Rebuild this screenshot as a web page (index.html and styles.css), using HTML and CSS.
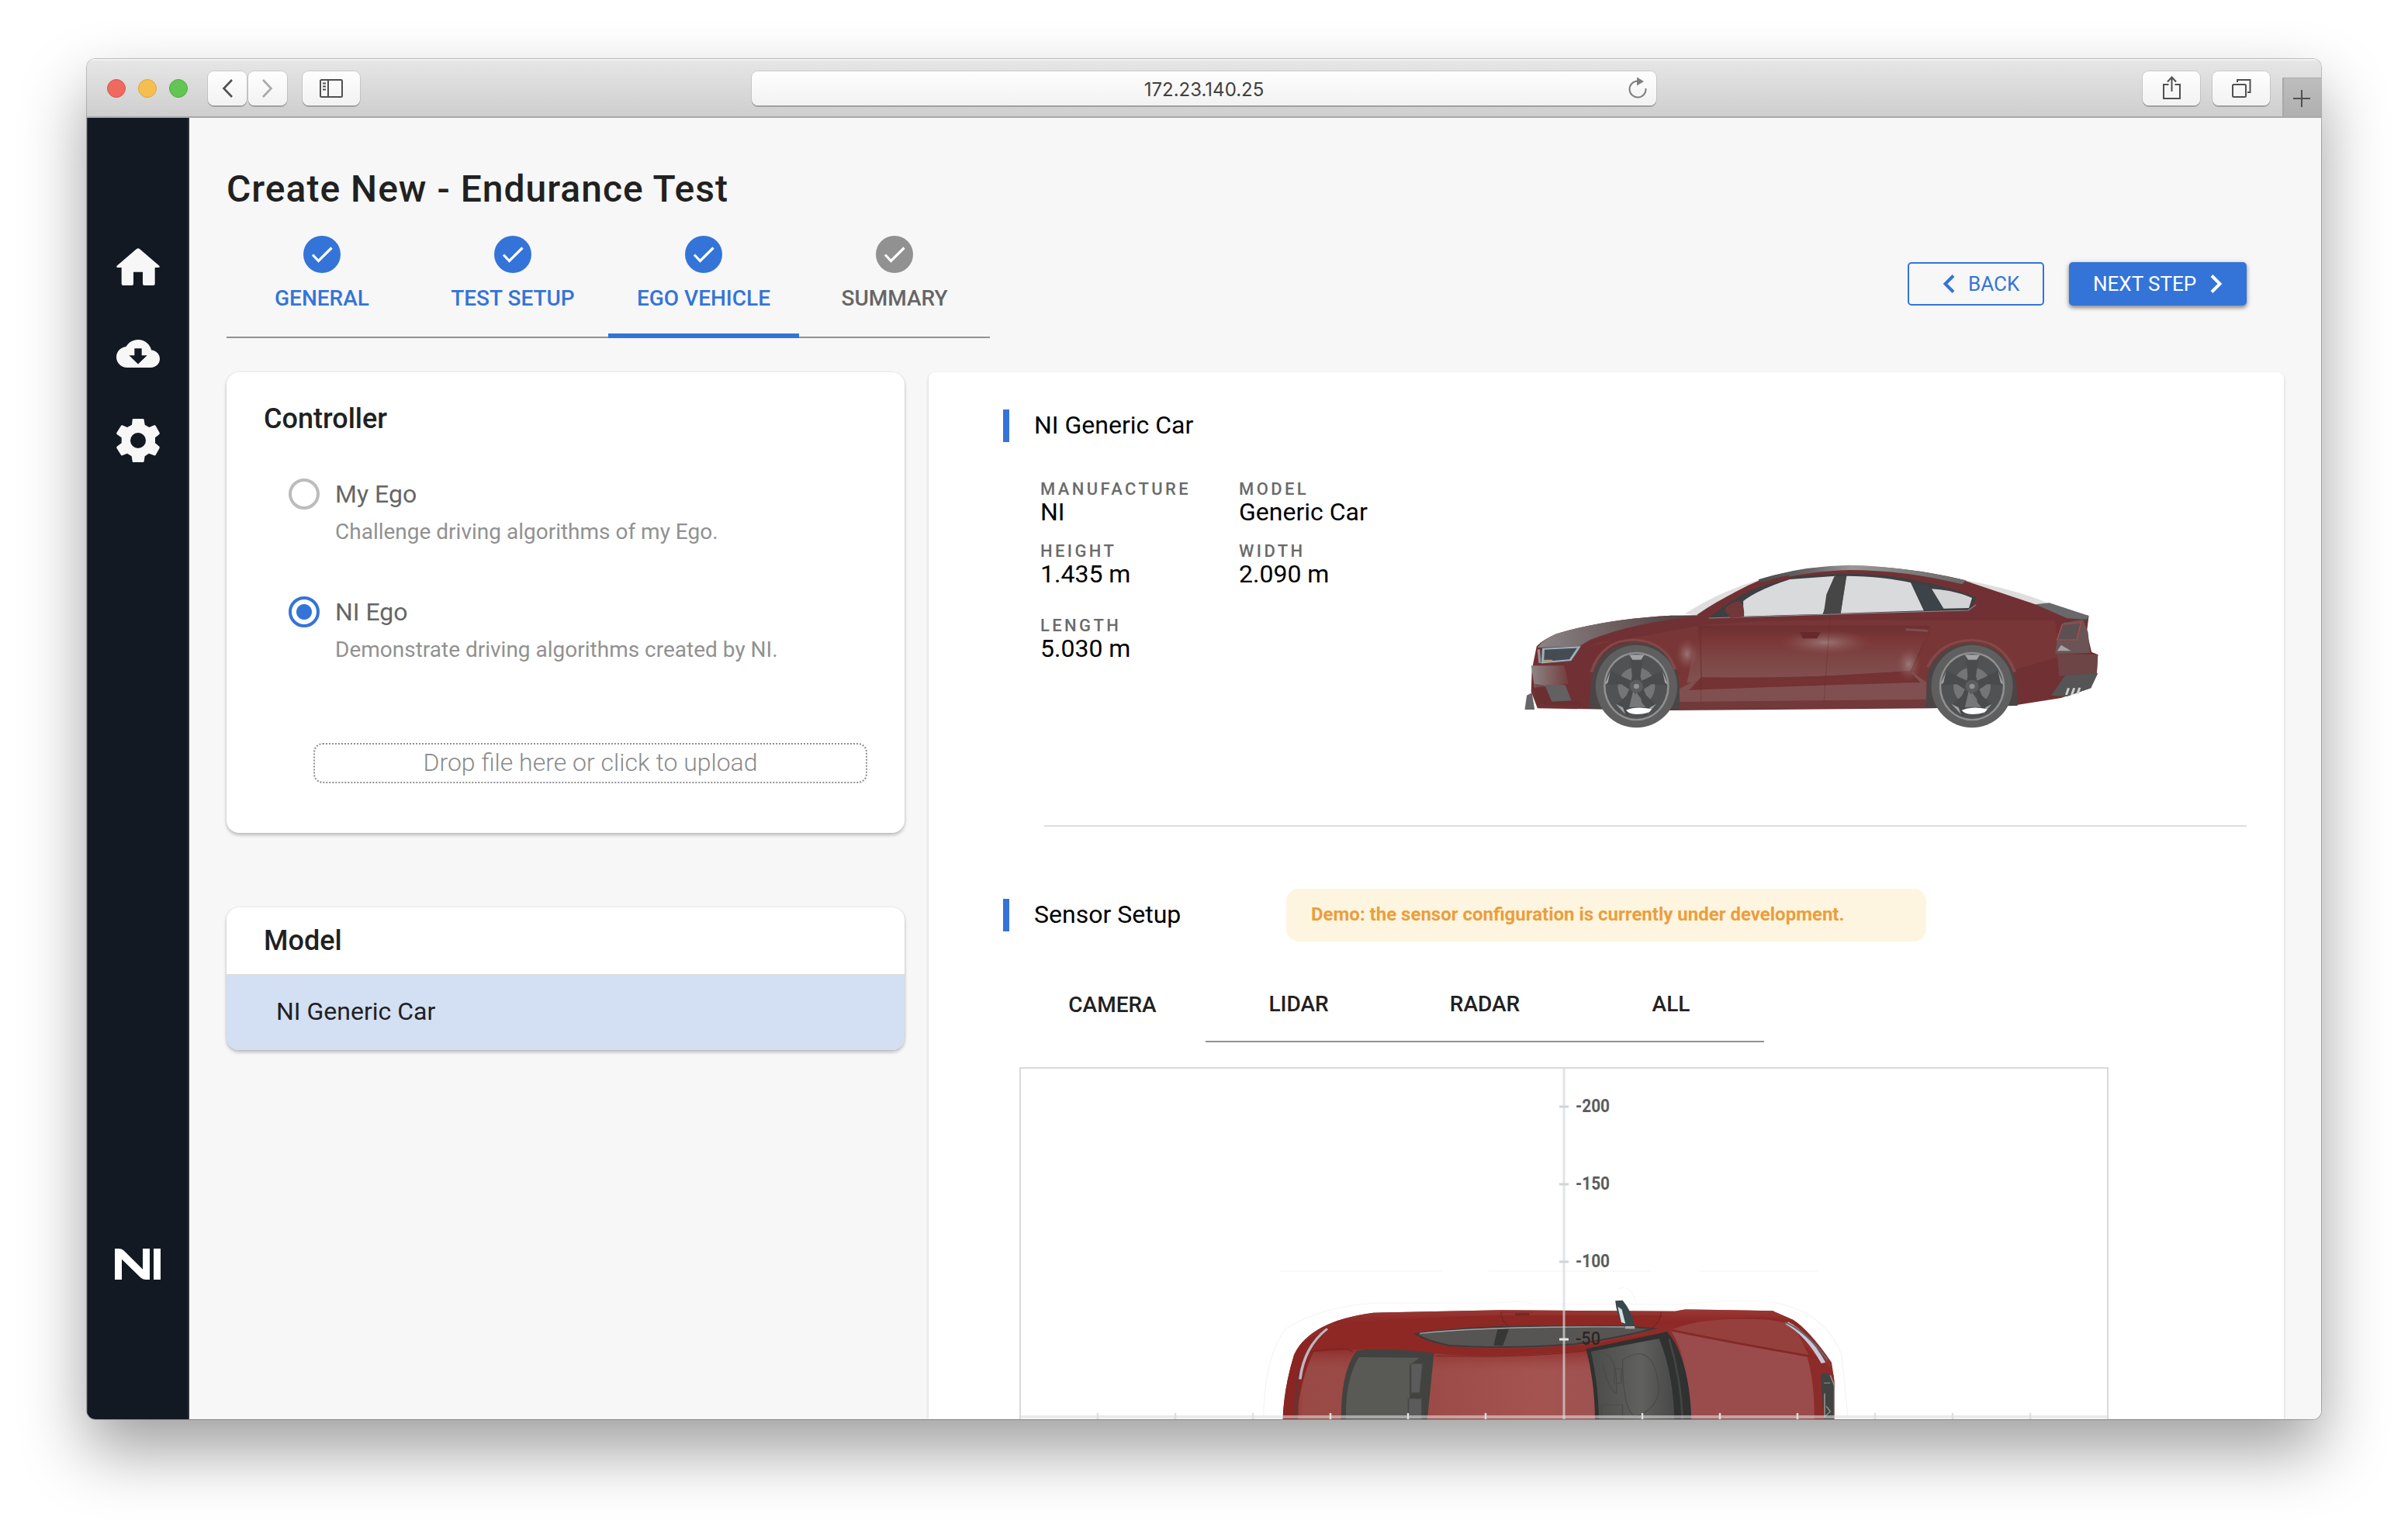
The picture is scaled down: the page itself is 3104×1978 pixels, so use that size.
FILE: index.html
```html
<!DOCTYPE html>
<html lang="en">
<head>
<meta charset="utf-8">
<title>Create New - Endurance Test</title>
<link rel="stylesheet" href="styles.css">
</head>
<body>
<div class="window">
  <header class="toolbar">
    <div class="lights"><i class="light red"></i><i class="light yellow"></i><i class="light green"></i></div>
    <div class="nav">
      <span class="tool half"><svg width="50" height="44" fill="none" stroke="#505050" stroke-width="2.6"><path d="M31 11 20.500 22 31 33"/></svg></span>
      <span class="tool half"><svg width="50" height="44" fill="none" stroke="#a9a9a9" stroke-width="2.600"><path d="M19 11 29.500 22 19 33"/></svg></span>
    </div>
    <span class="tool side-toggle"><svg width="74" height="44" fill="none" stroke="#505050" stroke-width="2"><rect x="23" y="11" width="28" height="22" rx="1.500"/><path d="M33 11v22M26 15.500h4M26 19.500h4M26 23.500h4"/></svg></span>
    <div class="address"><span>172.23.140.25</span>
      <svg class="reload" width="28" height="28"><path d="M24.500 15A10.500 10.500 0 1 1 14 5.500" fill="none" stroke="#808080" stroke-width="2"/><path d="M13 0.500 22 6 13 11.500Z" fill="#808080"/></svg>
    </div>
    <div class="tools-right">
      <span class="tool wide"><svg width="74" height="44" fill="none" stroke="#505050" stroke-width="2"><path d="M33.500 17H27v18h21V17H41.500M37.500 26V8M32 13.500 37.500 7.500 43 13.500"/></svg></span>
      <span class="tool wide"><svg width="74" height="44" fill="none" stroke="#505050" stroke-width="2"><rect x="26" y="17" width="17" height="16" rx="1.500"/><path d="M32 14V11H48.500V27H45"/></svg></span>
    </div>
    <span class="new-tab"><svg width="48" height="49" stroke="#505050" stroke-width="2"><path d="M12 26H34M23 15V37"/></svg></span>
  </header>

  <div class="app">
    <nav class="sidebar">
      <svg class="ico-home" width="56" height="48" viewBox="0 0 168 144" fill="#f7f7f7"><path d="M78 3Q84-2 90 3L166 68Q170 75 162 75H149V138Q149 144 143 144H108Q102 144 102 138V92H66V138Q66 144 60 144H26Q20 144 20 138V75H6Q-2 75 2 68Z"/></svg>
      <svg class="ico-cloud" width="56" height="36" viewBox="0 4 24 16" preserveAspectRatio="none" fill="#f7f7f7"><path fill-rule="evenodd" d="M19.350 10.040C18.670 6.590 15.640 4 12 4 9.110 4 6.600 5.640 5.350 8.040 2.340 8.360 0 10.910 0 14c0 3.310 2.690 6 6 6h13c2.760 0 5-2.240 5-5 0-2.640-2.050-4.780-4.650-4.960zM17 13l-5 5-5-5h3V9h4v4h3z"/></svg>
      <svg class="ico-gear" width="56" height="56" viewBox="180 720 168 168" fill="#f7f7f7"><path fill-rule="evenodd" d="M245 720H283Q286 720 287 724L290 743 307 753 326 745Q330 744 332 747L347 774Q348 778 346 780L330 793V814L346 827Q348 830 347 833L332 860Q330 863 326 862L306 854 290 865 287 884Q286 888 283 888H245Q242 888 242 884L239 865 222 854 203 862Q200 863 198 860L181 833Q180 830 182 827L200 814V793L182 780Q180 778 181 774L198 747Q200 744 203 745L222 753 240 743 242 724Q242 720 245 720ZM264 774A30 30 0 1 0 264 834A30 30 0 1 0 264 774Z"/></svg>
      <svg class="logo" width="59" height="40" viewBox="0 0 177 120" fill="#fff" role="img" aria-label="NI"><path d="M0 0H14Q26 0 34 7L108 80V0H135V120H121Q109 120 101 113L27 41V120H0ZM150 0H177V120H150Z"/></svg>
    </nav>

    <main class="main">
      <h1>Create New - Endurance Test</h1>
      <div class="head-row">
        <div class="steps">
          <div class="step done"><svg width="48" height="48"><circle cx="24" cy="24" r="24"/><path d="M12 24.500 19.500 32.500 36.500 15.500"/></svg><span>GENERAL</span></div>
          <div class="step done"><svg width="48" height="48"><circle cx="24" cy="24" r="24"/><path d="M12 24.500 19.500 32.500 36.500 15.500"/></svg><span>TEST SETUP</span></div>
          <div class="step done active"><svg width="48" height="48"><circle cx="24" cy="24" r="24"/><path d="M12 24.500 19.500 32.500 36.500 15.500"/></svg><span>EGO VEHICLE</span></div>
          <div class="step"><svg width="48" height="48"><circle cx="24" cy="24" r="24"/><path d="M12 24.500 19.500 32.500 36.500 15.500"/></svg><span>SUMMARY</span></div>
        </div>
        <div class="actions">
          <button class="btn back"><svg width="16" height="24" fill="none" stroke="#3474d8" stroke-width="4"><path d="M14 1.500 3.500 12 14 22.500"/></svg>BACK</button>
          <button class="btn next">NEXT STEP<svg width="16" height="24" fill="none" stroke="#fff" stroke-width="4"><path d="M2 1.500 12.500 12 2 22.500"/></svg></button>
        </div>
      </div>

      <div class="columns">
        <div class="left">
          <section class="card controller">
            <h2>Controller</h2>
            <div class="option"><i class="radio"></i><div><b>My Ego</b><p>Challenge driving algorithms of my Ego.</p></div></div>
            <div class="option"><i class="radio on"></i><div><b>NI Ego</b><p>Demonstrate driving algorithms created by NI.</p></div></div>
            <div class="drop">Drop file here or click to upload</div>
          </section>
          <section class="card model">
            <h2>Model</h2>
            <div class="model-row">NI Generic Car</div>
          </section>
        </div>

        <section class="panel">
          <h3 class="heading">NI Generic Car</h3>
          <div class="profile">
            <dl class="specs">
              <div><dt>MANUFACTURE</dt><dd>NI</dd></div>
              <div><dt>MODEL</dt><dd>Generic Car</dd></div>
              <div><dt>HEIGHT</dt><dd>1.435 m</dd></div>
              <div><dt>WIDTH</dt><dd>2.090 m</dd></div>
              <div class="length"><dt>LENGTH</dt><dd>5.030 m</dd></div>
            </dl>
            <svg class="side-car" width="800" height="260" viewBox="0 0 1568 780" preserveAspectRatio="none">
              <defs>
                <linearGradient id="door" x1="0" y1="0" x2="0" y2="1"><stop offset="0" stop-color="#6d3032"/><stop offset=".25" stop-color="#7a3736"/><stop offset=".6" stop-color="#7d4746"/><stop offset="1" stop-color="#825150"/></linearGradient>
                <linearGradient id="roof" x1="0" x2="1"><stop offset="0" stop-color="#4c4c4c"/><stop offset=".25" stop-color="#6a6466"/><stop offset=".45" stop-color="#999"/><stop offset=".8" stop-color="#777"/><stop offset="1" stop-color="#6a6a6a"/></linearGradient>
                <linearGradient id="nose" x1="0" x2="1"><stop offset="0" stop-color="#8d8687"/><stop offset="1" stop-color="#743c3c"/></linearGradient>
                <linearGradient id="hood" x1="0" x2="1"><stop offset="0" stop-color="#8b8586"/><stop offset=".5" stop-color="#6b5c5d"/><stop offset="1" stop-color="#4e3c3e"/></linearGradient>
                <radialGradient id="shine"><stop offset="0" stop-color="#a08585" stop-opacity=".8"/><stop offset="1" stop-color="#8a5554" stop-opacity="0"/></radialGradient>
                <g id="wheel">
                  <ellipse rx="103" ry="160" fill="#5f5f5f"/>
                  <ellipse rx="83" ry="133" fill="#909090"/>
                  <ellipse rx="78" ry="126" fill="#515253"/>
                  <ellipse rx="47" ry="74" fill="#757577"/>
                  <g fill="#4a4b4c">
                    <path d="M-16-122H18L10-40 15-8H-15L-11-40Z"/>
                    <path d="M64-60 79-5 38-8 14 16 2-14 30-34ZM-64-60-79-5-38-8-14 16-2-14-30-34ZM48 70 20 118 12 48-4 15 15 0 25 35ZM-48 70-22 118-12 48 4 15-15 0-25 35Z"/>
                  </g>
                  <path d="M-18-122H20L12-103H-10ZM66-58 80-5 72-14ZM-66-58-80-5-72-14ZM50 68 28 108 34 82ZM-52 68-28 108-34 82Z" fill="#a0a2a4"/>
                  <path d="M-26 92Q0 76 38 88Q34 108 0 108Q-20 106-26 92Z" fill="#fff"/>
                  <path d="M-8 16 0 42 24 80H-18Z" fill="#77787a"/>
                  <ellipse rx="17" ry="25" fill="#5c5d5f"/><ellipse rx="7" ry="10" fill="#909193"/>
                </g>
              </defs>
              <path d="M455 274 Q540 190 640 143L652 150 490 282ZM1150 140 Q1290 180 1372 233L1330 246 1160 165Z" fill="#dedede"/>
              <path d="M50 645 55 590 68 580 75 645Z" fill="#666"/>
              <path d="M82 640 66 575 68 490 80 400Q95 375 130 352 250 295 420 281L490 280Q570 190 650 140 745 92 870 90 1010 90 1150 140L1340 238 1475 282 1470 345 1482 422 1498 432 1495 510 1480 562 1405 600 1290 628 1080 640 420 648Z" fill="#713134"/>
              <path d="M82 405 Q95 375 130 352 250 295 420 281L490 284Q330 305 215 375L188 400Z" fill="url(#hood)"/>
              <path d="M640 142Q745 90 870 86 1010 90 1165 145L1155 160Q1010 105 870 105 745 110 650 160Z" fill="url(#roof)"/>
              <path d="M490 320 Q700 290 1060 300L1390 300 1400 440 1290 490 1060 540 1000 625 420 640 440 500 360 390 250 380 210 400Z" fill="#783736"/>
              <path d="M490 320H1075L1025 495 805 515 460 540Z" fill="url(#door)"/>
              <path d="M470 540 1030 500 1065 540V625L440 635 435 570Z" fill="#805050"/>
              <path d="M495 520Q800 525 1020 495L1050 540Q800 550 465 570Z" fill="#743233"/>
              <path d="M440 615 1065 605V636L440 646Z" fill="#72393a"/>
              <path d="M66 475H150L160 545 75 560Z" fill="url(#nose)"/>
              <path d="M100 548 152 550 168 610 118 614Z" fill="#626061"/>
              <path d="M75 545 100 552 118 614 180 612 205 630 80 625Z" fill="#672e31" opacity=".6"/>
              <path d="M85 412 88 465" stroke="#9a9696" stroke-width="6"/>
              <path d="M97 410 187 403 165 453 95 463Z" fill="#454b50" stroke="#91b6c3" stroke-width="6"/>
              <path d="M98 452h22v9H96z" fill="#b59b75"/>
              <ellipse cx="810" cy="385" rx="115" ry="48" fill="url(#shine)"/><ellipse cx="460" cy="430" rx="28" ry="60" fill="url(#shine)"/><ellipse cx="1020" cy="470" rx="30" ry="65" fill="url(#shine)"/>
              <path d="M515 292Q600 175 720 132 850 112 960 125 1100 155 1192 212L1175 260 830 272Z" fill="#3d3f42"/>
              <path d="M602 225Q640 180 720 141L835 128 803 275 602 284Z" fill="#d9dadc"/>
              <path d="M863 128Q960 130 1025 154L1058 262 848 272Z" fill="#d9dadc"/>
              <path d="M1078 178Q1140 185 1180 213L1172 252 1108 254Z" fill="#d3d4d6"/>
              <path d="M832 130 862 128 848 274 805 276 812 200Z" fill="#464646"/>
              <path d="M1028 155 1073 168 1108 256 1062 262Z" fill="#3c4349"/>
              <path d="M515 291 830 276 1170 261 1190 240" fill="none" stroke="#8b8c8e" stroke-width="3"/>
              <path d="M490 283Q600 165 720 132" fill="none" stroke="#713134" stroke-width="14"/>
              <path d="M555 262Q560 235 592 224 606 240 604 286L570 290Z" fill="#713739"/>
              <path d="M822 278 806 610M490 320 497 520M1077 330 1025 498 1045 540M495 322V620" fill="none" stroke="#5f2b2d" stroke-width="1.500" opacity=".7"/>
              <path d="M745 345H798L788 370H752Z" fill="#68292c"/><path d="M1012 335 1068 340" stroke="#7c504f" stroke-width="8"/>
              <path d="M1340 238 1375 232 1475 282 1470 296 1420 292Z" fill="#69686a"/>
              <path d="M1410 310 1460 296 1473 345 1478 425 1390 430 1395 370Z" fill="#6b5455"/>
              <path d="M1408 315 1455 308 1445 375H1395Z" fill="#5d5052" stroke="#a94c4d" stroke-width="3"/>
              <path d="M1395 430 1498 432 1495 510 1400 515Z" fill="#6d4546"/>
              <path d="M1415 514 1498 505 1480 562 1420 594 1380 590Z" fill="#565555"/>
              <path d="M1418 588 1424 562M1432 588 1438 562M1446 584 1452 560" fill="none" stroke="#cfcfcf" stroke-width="6"/>
              <path d="M1395 418 1405 395 1430 418Z" fill="#a9a1a1"/>
              <path d="M212 642 218 520Q240 395 325 385 425 390 440 540L442 645ZM1063 636 1068 500Q1100 390 1180 388 1270 400 1292 540L1295 630Z" fill="#4b4546"/>
              <path d="M218 500Q245 375 325 375 405 380 430 490M1068 480Q1100 378 1180 376 1260 380 1288 500" fill="none" stroke="#824948" stroke-width="8"/>
              <use href="#wheel" x="332" y="555"/><use href="#wheel" x="1180" y="555"/>
            </svg>
          </div>
          <hr>
          <div class="sensor-head">
            <h3 class="heading">Sensor Setup</h3>
            <div class="alert">Demo: the sensor configuration is currently under development.</div>
          </div>
          <div class="tabs"><span class="tab current">CAMERA</span><span class="tab">LIDAR</span><span class="tab">RADAR</span><span class="tab">ALL</span></div>
          <svg class="chart" width="1404" height="454" viewBox="1314 1376 1404 454">
            <defs>
              <linearGradient id="paint" x1="0" x2="1"><stop offset="0" stop-color="#8b2624"/><stop offset=".04" stop-color="#9a4a46"/><stop offset=".25" stop-color="#9c4a47"/><stop offset=".46" stop-color="#a45350"/><stop offset=".7" stop-color="#98504f"/><stop offset=".93" stop-color="#9b4a4a"/><stop offset="1" stop-color="#8b2725"/></linearGradient>
              <linearGradient id="top" x1="0" y1="0" x2="0" y2="1"><stop offset="0" stop-color="#9a3b38"/><stop offset=".12" stop-color="#8d2825"/><stop offset=".38" stop-color="#902f2c" stop-opacity=".85"/><stop offset=".55" stop-color="#984240" stop-opacity="0"/></linearGradient>
              <linearGradient id="cabin" x1="0" x2="1"><stop offset="0" stop-color="#4b4c4a"/><stop offset=".6" stop-color="#60605f"/><stop offset="1" stop-color="#484848"/></linearGradient>
              <clipPath id="carclip"><path d="M102 632Q105 510 130 380 170 250 325 218L640 208 1070 212 1095 205 1310 211 1360 245Q1400 285 1455 410L1462 480V632Z"/></clipPath>
            </defs>
            <svg x="1600" y="1620" width="820" height="260" viewBox="0 0 1568 780" preserveAspectRatio="none">
              <path d="M55 620Q58 380 110 280 200 190 340 180H640Q680 168 720 184L1090 186Q1220 162 1320 180 1440 220 1480 380L1495 620M930 125Q960 110 972 172M95 57H495M610 57H1010M1130 57H1422" fill="none" stroke="#f4f4f4" stroke-width="2.500"/>
              <g clip-path="url(#carclip)">
                <rect x="100" y="200" width="1365" height="440" fill="url(#paint)"/>
                <rect x="100" y="200" width="1365" height="440" fill="url(#top)"/>
                <path d="M102 640Q108 420 150 330L215 280Q150 400 135 640Z" fill="#8a2522"/>
                <path d="M128 640Q130 500 142 430L140 640Z" fill="#70302e"/>
                <path d="M205 282Q260 245 640 228H1040L1015 280Q800 262 540 276L435 300 500 345Q620 370 850 342L1055 290Q1200 220 1320 240L1400 360 1435 410 1060 285 850 365Q600 400 480 375L290 360 170 370Z" fill="#8d2825"/>
                <path d="M1055 288Q1130 230 1300 245L1360 262 1400 385Z" fill="#96403e"/>
                <path d="M1060 290Q1200 335 1400 390L1435 640H1112Q1105 400 1060 290Z" fill="#9a4c4c"/>
                <path d="M1395 388 1440 412 1465 470V640H1412Q1415 500 1395 388Z" fill="#8c2c2a"/>
                <path d="M640 216Q640 250 662 275M1035 215Q1035 250 1012 278M640 216H720M170 370Q260 345 275 370M480 385Q700 395 850 365" fill="none" stroke="#6e2422" stroke-width="2"/>
                <path d="M675 220h35v9h-35z" fill="#772624"/>
                <path d="M1060 285Q1200 330 1400 385" fill="none" stroke="#812a28" stroke-width="7"/>
                <path d="M430 300Q530 275 720 271L945 270 1015 280Q930 315 820 340 650 360 510 344 455 325 430 300Z" fill="#565553" stroke="#3b3b3a" stroke-width="6"/>
                <path d="M632 282 660 280 645 346 622 345Z" fill="#373736"/>
                <path d="M440 298Q600 270 945 273" fill="none" stroke="#9fa2a2" stroke-width="4"/>
                <path d="M246 640Q245 440 285 365L310 360Q420 360 475 375L458 640Z" fill="#424241"/>
                <path d="M258 640Q255 480 290 390L440 392 415 420V640Z" fill="#595955"/>
                <path d="M418 415H447L440 528H418ZM412 550H445V640H412Z" fill="#5b5b5c" stroke="#494949" stroke-width="3"/>
                <path d="M850 358 1050 292Q1105 390 1110 640H872Q872 490 850 358Z" fill="#303131"/>
                <path d="M862 368 1030 318Q1065 450 1068 640H882Q880 490 862 368Z" fill="url(#cabin)"/>
                <path d="M940 400Q1020 320 1030 520 1020 600 970 620 940 590 940 400M880 370Q930 370 925 530 905 520 890 410M888 575H940V630H888ZM920 435H937V490H920Z" fill="none" stroke="#4a4a4a" stroke-width="2.500"/>
                <path d="M1055 320Q1085 480 1088 640" fill="none" stroke="#454545" stroke-width="5"/>
                <path d="M212 280Q155 350 145 475" fill="none" stroke="#b9b8c3" stroke-width="7"/>
                <path d="M1345 258Q1395 300 1435 412" fill="none" stroke="#c8c8d8" stroke-width="11"/>
                <path d="M1340 255Q1390 285 1445 400" fill="none" stroke="#656568" stroke-width="5"/>
                <path d="M1428 455 1445 450 1465 490V640H1436Z" fill="#414341"/>
                <path d="M1436 490h16M1438 530v90l14-20-10-20M1452 460 1462 500V640" fill="none" stroke="#929494" stroke-width="3"/>
              </g>
              <path d="M922 172 940 170Q962 210 970 268L946 272Q925 230 922 172Z" fill="#39464a"/>
              <path d="M928 195 938 205 947 260 937 255Z" fill="#d0e1e6"/><path d="M946 270h24v10h-24z" fill="#aaa9a9"/>
            </svg>
            <path d="M2016 1378V1830" stroke="#d8dadb" stroke-width="3" opacity=".7"/>
            <path d="M1315 1827H2717" stroke="#dedede" stroke-width="4" opacity=".6"/>
            <path d="M2010 1427h12M2010 1527h12M2010 1627h12" stroke="#d0d5d7" stroke-width="3"/><path d="M2010 1727h12" stroke="#e4e6e7" stroke-width="3"/>
            <path d="M1415 1822v8M1515 1822v8M1615 1822v8M1715 1822v8M1815 1822v8M1915 1822v8M2117 1822v8M2217 1822v8M2317 1822v8M2417 1822v8M2517 1822v8M2617 1822v8" stroke="#dce0e3" stroke-width="2.500"/>
            <g class="axis" lengthAdjust="spacingAndGlyphs"><text x="2031" y="1434" textLength="44" lengthAdjust="spacingAndGlyphs">-200</text><text x="2031" y="1534" textLength="44" lengthAdjust="spacingAndGlyphs">-150</text><text x="2031" y="1634" textLength="44" lengthAdjust="spacingAndGlyphs">-100</text><text x="2031" y="1734" class="dark" textLength="32" lengthAdjust="spacingAndGlyphs">-50</text></g>
            <path d="M1315 1830V1377H2717V1830" fill="none" stroke="#dadada" stroke-width="2"/>
          </svg>
        </section>
      </div>
    </main>
  </div>
</div>
</body>
</html>
```
FILE: styles.css
```css
* { box-sizing: border-box; }
body {
  margin: 0;
  width: 3104px;
  height: 1978px;
  padding: 76px 112px;
  background: #fff;
  overflow: hidden;
  font-family: Roboto, "Liberation Sans", sans-serif;
  color: #212121;
}
h1, h2, h3, p, dl, dd { margin: 0; }
svg { display: block; flex: none; }

.window {
  width: 2880px;
  height: 1754px;
  border-radius: 11px;
  overflow: hidden;
  display: flex;
  flex-direction: column;
  box-shadow: 0 0 0 1px rgba(0, 0, 0, .22), 0 40px 84px rgba(0, 0, 0, .38);
}

/* browser toolbar */
.toolbar {
  height: 76px;
  flex: none;
  display: flex;
  align-items: center;
  padding-left: 26px;
  background: linear-gradient(#e6e6e6, #cecece);
  border-top: 2px solid #f2f2f2;
  border-bottom: 2px solid #a9a9a9;
}
.lights { display: flex; gap: 16px; width: 130px; }
.light { width: 24px; height: 24px; border-radius: 50%; border: 1px solid; }
.red { background: #ee6a5f; border-color: #d95549; }
.yellow { background: #f5bf4f; border-color: #dca63c; }
.green { background: #62c554; border-color: #50ad42; }
.nav { display: flex; gap: 2px; margin-right: 20px; }
.tool {
  display: block;
  height: 44px;
  border-radius: 8px;
  background: linear-gradient(#fefefe, #f2f2f2);
  box-shadow: 0 0 0 1px rgba(0, 0, 0, .1), 0 2px 0 rgba(0, 0, 0, .2);
}
.half { width: 50px; }
.side-toggle, .wide { width: 74px; }
.address {
  display: flex;
  justify-content: center;
  align-items: center;
  position: relative;
  width: 1166px;
  height: 44px;
  margin-left: 505px;
  padding-top: 2px;
  border-radius: 8px;
  background: linear-gradient(#fefefe, #f2f2f2);
  box-shadow: 0 0 0 1px rgba(0, 0, 0, .1), 0 2px 0 rgba(0, 0, 0, .2);
  font: 400 24px Inter, sans-serif;
  color: #404040;
}
.reload { position: absolute; right: 10px; top: 7px; }
.tools-right { display: flex; gap: 16px; margin-left: 627px; }
.new-tab {
  width: 50px;
  height: 50px;
  margin: 22px 0 0 auto;
  background: linear-gradient(#bdbdbd, #b0b0b0);
  border-left: 2px solid #a8a8a8;
  border-top: 1px solid #aaa;
}

/* application */
.app { flex: 1; display: flex; min-height: 0; background: #f7f7f7; }
.sidebar {
  width: 132px;
  flex: none;
  display: flex;
  flex-direction: column;
  align-items: center;
  padding: 168px 0 180px;
  background: #121922;
  border-right: 2px solid #2c323c;
  border-left: 1px solid #3a4048;
}
.ico-cloud { margin-top: 70px; }
.ico-gear { margin-top: 66px; }
.logo { margin-top: auto; }
.main { flex: 1; padding: 64px 48px 0; }
h1 { font-size: 48px; line-height: 56px; font-weight: 500; letter-spacing: 1px; margin-bottom: 32px; }
.head-row { display: flex; justify-content: space-between; height: 132px; margin-bottom: 44px; }
.steps { display: flex; }
.step {
  width: 246px;
  height: 132px;
  display: flex;
  flex-direction: column;
  align-items: center;
  gap: 17px;
  border-bottom: 2px solid #919191;
  color: #666;
  font-size: 28px;
  line-height: 32px;
  font-weight: 500;
}
.step circle { fill: #919191; }
.step path { fill: none; stroke: #fff; stroke-width: 3.200; }
.done { color: #3474d8; }
.done circle { fill: #3474d8; }
.active { border-bottom: 6px solid #3474d8; }
.actions { display: flex; gap: 32px; margin: 34px 48px 0 0; height: 56px; }
.btn {
  display: flex;
  align-items: center;
  height: 56px;
  border-radius: 5px;
  font: 400 26px Roboto, sans-serif;
  white-space: nowrap;
}
.back { width: 176px; padding: 0 0 0 43px; gap: 17px; border: 2px solid #3474d8; color: #3474d8; background: none; }
.next { width: 229px; padding: 0 0 0 31px; gap: 18px; border: 0; color: #fff; background: #3474d8; box-shadow: 0 3px 5px rgba(0, 0, 0, .38), 0 1px 8px rgba(0, 0, 0, .15); }

.columns { display: flex; gap: 31px; align-items: flex-start; }
.left { width: 874px; flex: none; display: flex; flex-direction: column; gap: 96px; }
.card { background: #fff; border-radius: 16px; overflow: hidden; box-shadow: 0 3px 4px rgba(0, 0, 0, .22), 0 0 3px rgba(0, 0, 0, .1); }
.card h2 { font-size: 36px; line-height: 44px; font-weight: 500; padding-left: 48px; }
.controller { height: 594px; padding-top: 38px; }
.controller h2 { margin-bottom: 55px; }
.option { display: flex; gap: 20px; padding-left: 80px; height: 86px; margin-bottom: 66px; }
.radio { flex: none; width: 40px; height: 40px; border: 4px solid #bcbcbc; border-radius: 50%; }
.radio.on { border-color: #3474d8; background: radial-gradient(circle, #3474d8 9.500px, #fff 10.500px); }
.option b { display: block; font-size: 32px; line-height: 40px; font-weight: 400; color: #666; }
.option p { font-size: 28px; line-height: 36px; margin-top: 11px; color: #919191; }
.drop {
  width: 714px;
  height: 52px;
  margin: 103px 0 0 112px;
  border: 2px dotted #919191;
  border-radius: 12px;
  text-align: center;
  font-size: 32px;
  line-height: 46px;
  font-weight: 300;
  color: #8a8a8a;
}
.model h2 { height: 88px; line-height: 86px; border-bottom: 2px solid #dedede; }
.model-row { height: 96px; padding-left: 64px; font-size: 32px; line-height: 93px; background: #d3dff2; }

.panel {
  width: 1747px;
  height: 1360px;
  padding-top: 48px;
  border-radius: 8px;
  background: #fff;
  box-shadow: 0 2px 4px rgba(0, 0, 0, .16);
  color: #000;
}
.heading { margin-left: 96px; padding-left: 32px; height: 42px; line-height: 41px; border-left: 8px solid #3474d8; font-size: 32px; font-weight: 400; }
.profile { display: flex; padding: 47px 0 0 144px; height: 494px; }
.specs { width: 599px; flex: none; display: grid; grid-template-columns: 256px 1fr; grid-template-rows: 61px 61px 61px; row-gap: 19px; }
dt { font-size: 22px; line-height: 27px; font-weight: 500; letter-spacing: 3.400px; color: #6a6a6a; }
dd { font-size: 32px; line-height: 33px; }
.length { margin-top: 16px; }
.side-car { margin-top: 83px; }
hr { width: 1550px; height: 2px; margin: 0 0 0 149px; border: 0; background: #dedede; }
.sensor-head { display: flex; align-items: center; height: 68px; margin-top: 80px; }
.sensor-head .heading { width: 365px; flex: none; }
.alert { width: 825px; height: 68px; padding-left: 32px; border-radius: 16px; background: #fdf5e0; color: #eb9e3d; font-size: 24px; font-weight: 700; line-height: 67px; }
.tabs { display: flex; margin: 34px 0 32px 117px; }
.tab { width: 240px; height: 96px; text-align: center; line-height: 94px; font-size: 28px; font-weight: 500; color: #212121; border-bottom: 2px solid #919191; }
.current { border: 0; line-height: 96px; }
.chart { margin-left: 117px; }
.axis text { font: 700 23px Roboto, sans-serif; fill: #5c5c5c; }
.axis .dark { fill: #302524; font-weight: 500; }
```
